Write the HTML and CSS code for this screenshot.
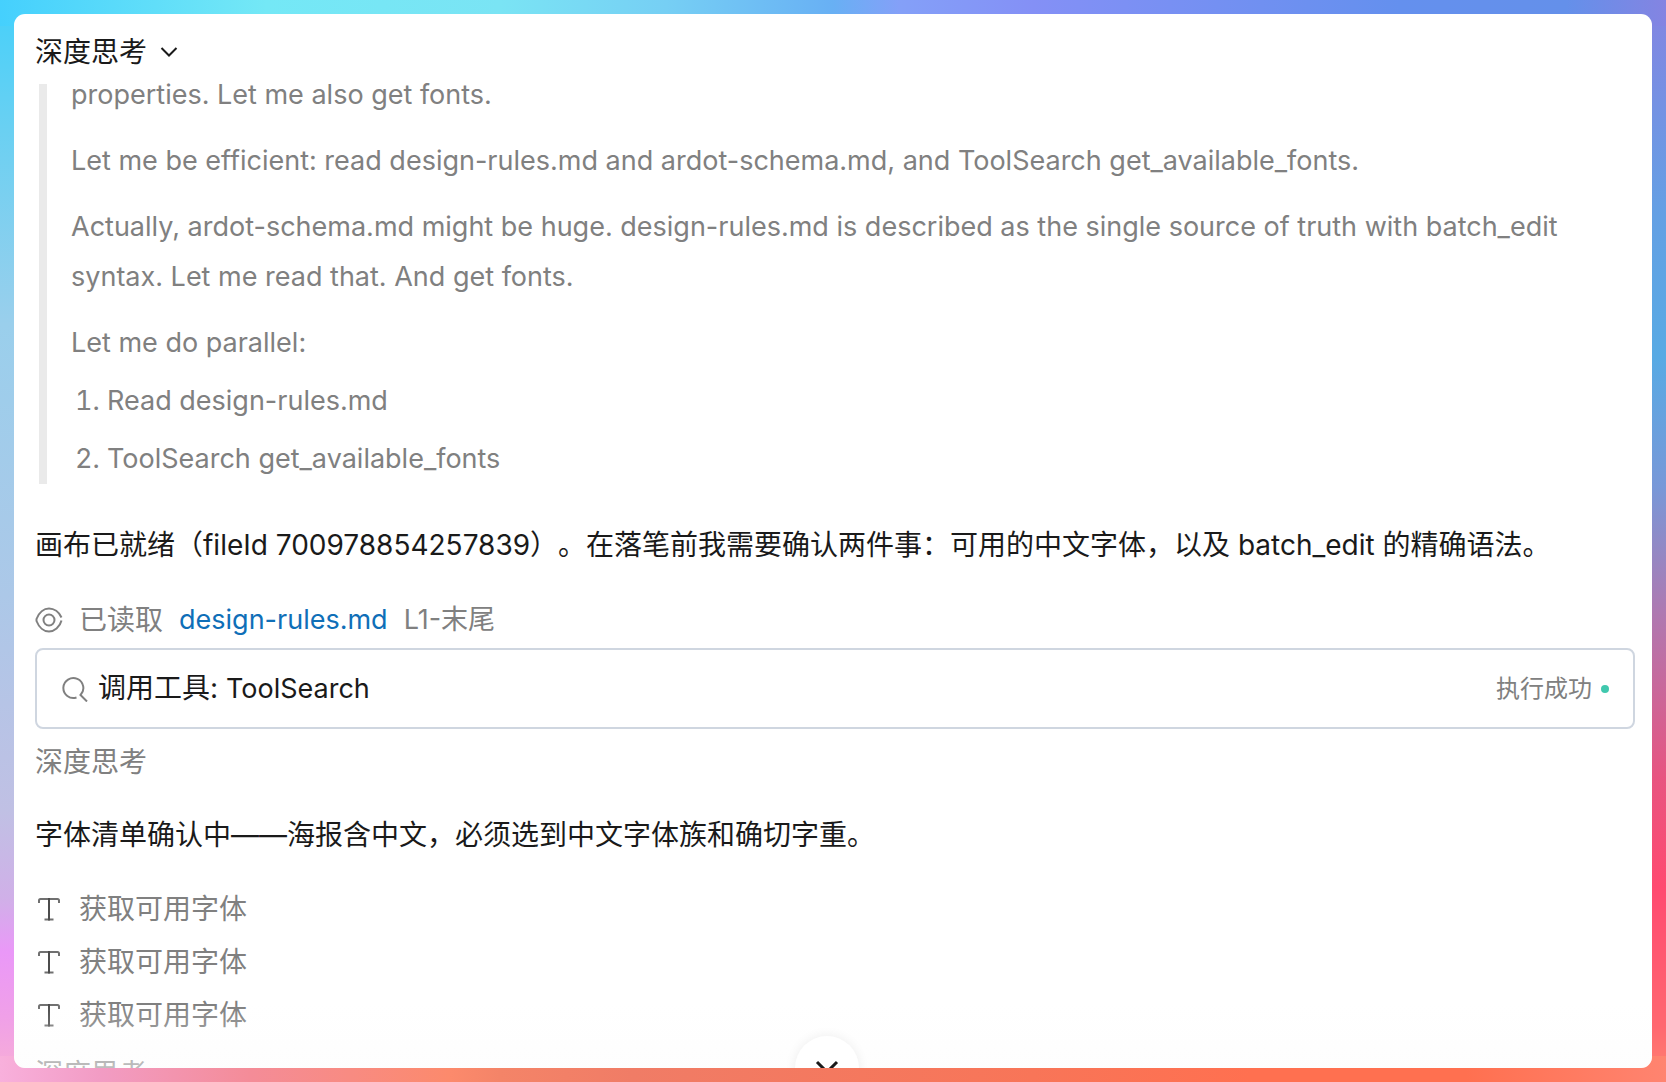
FILE: index.html
```html
<!DOCTYPE html>
<html lang="zh-CN">
<head>
<meta charset="utf-8">
<meta name="viewport" content="width=device-width, initial-scale=1">
<title>深度思考</title>
<link rel="stylesheet" href="styles.css">
</head>
<body>
<svg class="sprite" aria-hidden="true">
  <symbol id="icon-type" viewBox="0 0 28 28">
    <path d="M4 8V5.500Q4 4 5.500 4H22.500Q24 4 24 5.500V8M9.500 24.500H18.500" fill="none" stroke="#707070" stroke-width="2"/>
    <path d="M14 3V25.500" fill="none" stroke="#4c4c4c" stroke-width="2"/>
  </symbol>
</svg>
<main class="panel">
  <div class="feed">
    <button class="think-toggle" type="button" aria-expanded="true">深度思考
      <svg class="chevron" viewBox="0 0 20 20" aria-hidden="true"><path d="M2.500 6 10 13.500 17.500 6" fill="none" stroke="currentColor" stroke-width="2"/></svg>
    </button>
    <blockquote class="thought">
      <p>properties. Let me also get fonts.</p>
      <p>Let me be efficient: read design-rules.md and ardot-schema.md, and ToolSearch get_available_fonts.</p>
      <p>Actually, ardot-schema.md might be huge. design-rules.md is described as the single source of truth with batch_edit syntax. Let me read that. And get fonts.</p>
      <p>Let me do parallel:</p>
      <ol>
        <li>Read design-rules.md</li>
        <li>ToolSearch get_available_fonts</li>
      </ol>
    </blockquote>
    <p class="message">画布已就绪（fileId 700978854257839）。在落笔前我需要确认两件事：可用的中文字体，以及 batch_edit 的精确语法。</p>
    <div class="step step-read">
      <svg class="icon" viewBox="0 0 28 28" aria-hidden="true"><g fill="none" stroke="currentColor" stroke-width="2"><path d="M26.500 11.500C24 6 19 2.500 14 2.500S4 6.500 1.500 13V15C4 21.500 9 25.500 14 25.500S25 21 26.500 14.500"/><circle cx="14" cy="14" r="5.500"/></g></svg>
      <span>已读取</span>
      <a class="file" href="#design-rules">design-rules.md</a>
      <span class="range">L1-末尾</span>
    </div>
    <section class="tool">
      <svg class="icon" viewBox="0 0 26 26" aria-hidden="true"><path d="M14.500 21.500A10 10 0 1 1 18.500 19L25 25.500" fill="none" stroke="currentColor" stroke-width="2"/></svg>
      <span class="tool-name">调用工具: <span class="latin">ToolSearch</span></span>
      <span class="tool-status">执行成功</span>
    </section>
    <p class="think-label">深度思考</p>
    <p class="message">字体清单确认中——海报含中文，必须选到中文字体族和确切字重。</p>
    <ul class="steps">
      <li class="step"><svg class="icon" aria-hidden="true"><use href="#icon-type"/></svg><span>获取可用字体</span></li>
      <li class="step"><svg class="icon" aria-hidden="true"><use href="#icon-type"/></svg><span>获取可用字体</span></li>
      <li class="step"><svg class="icon" aria-hidden="true"><use href="#icon-type"/></svg><span>获取可用字体</span></li>
    </ul>
    <p class="think-label">深度思考</p>
  </div>
  <div class="fade"></div>
  <button class="to-bottom" type="button" aria-label="滚动到底部">
    <svg viewBox="0 0 28 28" aria-hidden="true"><path d="M4 8 14 18 24 8" fill="none" stroke="currentColor" stroke-width="3"/></svg>
  </button>
</main>
</body>
</html>
```
FILE: styles.css
```css
* { box-sizing: border-box; }

body {
  margin: 0;
  height: 100vh;
  padding: 14px;
  overflow: hidden;
  color: #1a1a1a;
  font: 28px/50px Inter, "Noto Sans CJK SC", sans-serif;
  text-spacing-trim: space-all;
  background:
    linear-gradient(90deg, #45d0fd, #74e8f6 16%, #7ae4f4 30%, #76cff4 40%, #68b0f4 50%, #84a0f8 54%, #8490f6 62%, #6490ee 84%, #6490ea 94%, #8484e2) top / 100% 26px no-repeat,
    linear-gradient(90deg, #f8b0dc, #f29cc4 6%, #f48c98 15%, #fc8a6c 27%, #f48468 30%, #f07c66 38%, #f87558 62%, #ff7050 75%, #ff7050 88%, #ff8470) bottom / 100% 26px no-repeat,
    linear-gradient(#45d0fa, #6ad0f2 12%, #9acfec 30%, #acc8e8 55%, #c0c0e4 75%, #d0b0e8 83%, #ea98f8 88%, #f0a0e8 94%, #f8b0d4) left / 14px 100% no-repeat,
    linear-gradient(#8484e2, #64a0e4 20%, #58aae4 33%, #7898d8 45%, #b078b0 57%, #e85480 72%, #ff4a70 82%, #ff6870 95%, #ff8470) right / 14px 100% no-repeat;
}

p, ol, ul, blockquote { margin: 0; padding: 0; }
ul { list-style: none; }
button { border: 0; padding: 0; font: inherit; color: inherit; cursor: pointer; }

.sprite { display: none; }

.panel {
  position: relative;
  height: 100%;
  overflow: hidden;
  border-radius: 11px;
  background: #fff;
}

.feed {
  display: flex;
  flex-direction: column;
  padding: 13px 17px 0 21px;
}

.think-toggle {
  display: flex;
  align-items: center;
  align-self: flex-start;
  gap: 12px;
  background: none;
}
.chevron { width: 20px; height: 20px; }

.thought {
  display: flex;
  flex-direction: column;
  justify-content: flex-end;
  gap: 16px;
  height: 400px;
  margin: 7px 0 0 4px;
  padding-left: 24px;
  border-left: 8px solid #eaeaea;
  color: #808080;
  font-size: 27px;
}
.thought ol {
  display: flex;
  flex-direction: column;
  gap: 8px;
  margin-top: -8px;
  padding-left: 36px;
}

.message { margin: 36px 0 0; }

.step {
  display: flex;
  align-items: center;
  gap: 16px;
  height: 53px;
  color: #808080;
}
.icon { flex: none; width: 28px; height: 28px; }
.step-read { margin-top: 23px; }
.file { color: #0f6fb8; text-decoration: none; }
.file, .latin, .range { font-size: 27px; }

.tool {
  display: flex;
  align-items: center;
  gap: 10px;
  height: 81px;
  margin-top: 2px;
  padding: 0 24px 0 25px;
  border: 2px solid #cfd6e0;
  border-radius: 8px;
}
.tool .icon { width: 26px; height: 26px; color: #808080; }
.tool-name { flex: 1; }
.tool-status {
  display: flex;
  align-items: center;
  gap: 9px;
  font-size: 24px;
  color: #808080;
}
.tool-status::after {
  content: "";
  width: 8px;
  height: 8px;
  border-radius: 50%;
  background: #40c8ae;
}

.think-label { margin-top: 8px; color: #808080; }
.think-label + .message { margin-top: 23px; }
.steps { margin-top: 22px; }

.fade {
  position: absolute;
  inset: auto 0 0;
  height: 64px;
  background: linear-gradient(#fcfcfc00, #fcfcfc80);
}

.to-bottom {
  position: absolute;
  bottom: -32px;
  left: calc(50% - 38px);
  display: grid;
  place-items: center;
  width: 64px;
  height: 64px;
  border-radius: 50%;
  background: #fff;
  box-shadow: 0 0 12px #00000012;
}
.to-bottom svg { width: 28px; height: 28px; }
```
